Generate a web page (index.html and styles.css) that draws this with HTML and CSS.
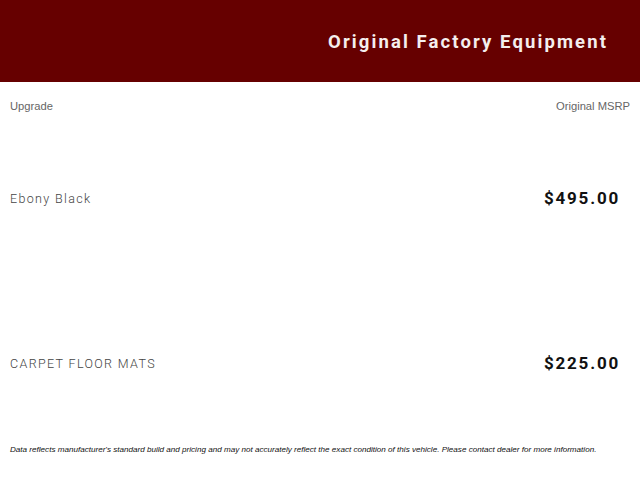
FILE: index.html
```html
<!DOCTYPE html>
<html>
<head>
<meta charset="utf-8">
<link rel="stylesheet" href="styles.css">
</head>
<body>
<header class="banner">
  <h1 class="banner-title">Original Factory Equipment</h1>
</header>
<div class="labels">
  <span>Upgrade</span>
  <span class="labels-right">Original MSRP</span>
</div>
<div class="items">
  <div class="item">
    <span class="item-name">Ebony Black</span>
    <span class="item-price">$495.00</span>
  </div>
  <div class="item">
    <span class="item-name">CARPET FLOOR MATS</span>
    <span class="item-price">$225.00</span>
  </div>
</div>
<p class="disclaimer">Data reflects manufacturer's standard build and pricing and may not accurately reflect the exact condition of this vehicle. Please contact dealer for more information.</p>
</body>
</html>
```
FILE: styles.css
```css
html, body {
  margin: 0;
  padding: 0;
  background: #ffffff;
}
body {
  width: 640px;
  height: 480px;
  overflow: hidden;
  font-family: "Liberation Sans", Arial, sans-serif;
}
.banner {
  height: 82px;
  background: #660000;
  display: flex;
  align-items: center;
  justify-content: flex-end;
  padding-right: 32px;
}
.banner-title {
  margin: 0;
  color: #f4eeee;
  font-family: Roboto, sans-serif;
  font-weight: bold;
  font-size: 18.5px;
  letter-spacing: 2.1px;
  line-height: 22px;
  padding-top: 2px;
}
.labels {
  height: 48px;
  display: flex;
  align-items: center;
  justify-content: space-between;
  padding: 0 10px;
  font-size: 11.2px;
  color: #666666;
}
.items {
  display: flex;
  flex-direction: column;
  gap: 145px;
  padding: 58px 20px 0 10px;
}
.item {
  height: 20px;
  display: flex;
  align-items: center;
  justify-content: space-between;
}
.item-name {
  font-family: Roboto, sans-serif;
  font-size: 12.5px;
  letter-spacing: 1.35px;
  color: #444444;
  font-weight: 300;
}
.item-price {
  font-family: Roboto, sans-serif;
  font-weight: bold;
  font-size: 17px;
  letter-spacing: 1.8px;
  color: #111111;
}
.disclaimer {
  margin: 71px 0 0 10px;
  font-size: 8.1px;
  line-height: 11px;
  font-style: italic;
  color: #111111;
}
```
